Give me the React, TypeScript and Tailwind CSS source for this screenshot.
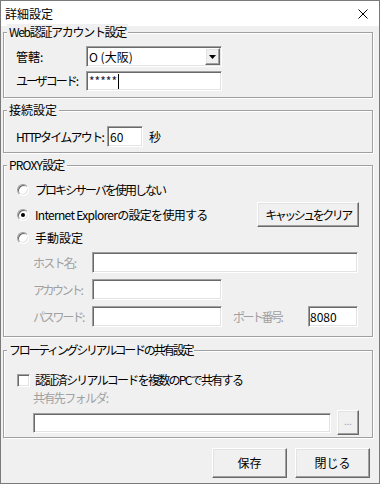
import type { ReactNode } from 'react';

const sunken =
  "border border-t-[#a0a0a0] border-l-[#a0a0a0] border-r-white border-b-white shadow-[inset_1px_1px_0_#696969,inset_-1px_-1px_0_#e3e3e3] bg-white";
const raised =
  "border border-t-white border-l-white border-r-[#696969] border-b-[#696969] shadow-[inset_-1px_-1px_0_#a0a0a0,inset_1px_1px_0_#e3e3e3] bg-[#f0f0f0]";

function Group({ title, className, titleClass, children }: { title: string; className: string; titleClass: string; children: ReactNode }) {
  return (
    <div className={`relative border border-[#a0a0a0] shadow-[inset_1px_1px_0_#fff,1px_1px_0_#fff] ${className}`}>
      <span className={`absolute left-[3px] top-[-9px] bg-[#f0f0f0] px-[2px] leading-[16px] whitespace-nowrap ${titleClass}`}>{title}</span>
      {children}
    </div>
  );
}

function Radio({ checked }: { checked?: boolean }) {
  return (
    <span className="relative flex h-[12px] w-[12px] shrink-0 items-center justify-center rounded-full border border-t-[#a0a0a0] border-l-[#a0a0a0] border-r-white border-b-white bg-white shadow-[inset_1px_1px_0_#696969,inset_-1px_-1px_0_#e3e3e3]">
      {checked && <span className="h-[4px] w-[4px] rounded-full bg-black" />}
    </span>
  );
}

function TextBox({ className, children }: { className: string; children?: ReactNode }) {
  return <div className={`${sunken} flex shrink-0 items-center pl-[1px] ${className}`}>{children}</div>;
}

function Label({ className, children }: { className: string; children: ReactNode }) {
  return <span className={`shrink-0 whitespace-nowrap ${className}`}>{children}</span>;
}

export default function App() {
  return (
    <div className="flex h-[484px] w-[380px] flex-col border border-[#7a7a7a] bg-[#f0f0f0] text-[12px] leading-[16px] text-black font-['Noto_Sans_CJK_JP',sans-serif]">
      {/* title bar */}
      <div className="flex h-[25px] items-center justify-between bg-white pl-[4px] pr-[11px]">
        <span>詳細設定</span>
        <svg width="10" height="10" viewBox="0 0 10 10">
          <path d="M0.5 0.5 L9.5 9.5 M9.5 0.5 L0.5 9.5" stroke="#000" strokeWidth="1" />
        </svg>
      </div>

      <div className="flex flex-col pl-[2px] pr-[6px]">
        <Group title="Web認証アカウント設定" titleClass="tracking-[-1.3px]" className="mt-[6px] h-[66px]">
          <div className="flex flex-col gap-[4px] pl-[12px] pt-[13px]">
            <div className="flex h-[21px] items-center">
              <Label className="w-[70px]">管轄:</Label>
              <div className={`${sunken} flex h-[21px] w-[136px] items-center justify-between pl-[2px] pr-[1px]`}>
                <span>O (大阪)</span>
                <span className={`${raised} flex h-[17px] w-[15px] items-center justify-center`}>
                  <svg width="7" height="4" viewBox="0 0 7 4">
                    <path d="M0 0 H7 L3.5 4 Z" fill="#000" />
                  </svg>
                </span>
              </div>
            </div>
            <div className="flex h-[20px] items-center">
              <Label className="w-[70px] tracking-[-2px]">ユーザコード:</Label>
              <TextBox className="h-[20px] w-[136px] pl-[2px]">
                <span className="text-[#1a1a3a]">*****</span>
                <span className="ml-[1px] h-[15px] w-[1px] bg-black" />
              </TextBox>
            </div>
          </div>
        </Group>

        <Group title="接続設定" titleClass="" className="mt-[12px] h-[43px]">
          <div className="flex items-center pl-[12px] pt-[15px]">
            <Label className="w-[91px] tracking-[-1.7px]">HTTPタイムアウト:</Label>
            <TextBox className="h-[21px] w-[36px] pl-[2px]">60</TextBox>
            <span className="ml-[6px]">秒</span>
          </div>
        </Group>

        <Group title="PROXY設定" titleClass="tracking-[-0.8px]" className="mt-[12px] h-[172px]">
          <div className="flex flex-col pl-[13px] pr-[13px] pt-[12px]">
            <div className="flex h-[24px] items-center gap-[6px]">
              <Radio />
              <span className="tracking-[-2px]">プロキシサーバを使用しない</span>
            </div>
            <div className="flex h-[25px] items-center gap-[6px]">
              <Radio checked />
              <span className="whitespace-nowrap tracking-[-0.7px]">Internet Explorerの設定を使用する</span>
              <button className={`${raised} ml-auto h-[25px] w-[102px] whitespace-nowrap tracking-[-2.5px]`}>キャッシュをクリア</button>
            </div>
            <div className="flex h-[22px] items-center gap-[6px]">
              <Radio />
              <span>手動設定</span>
            </div>
          </div>
          <div className="mt-[3px] flex flex-col gap-[6px] pl-[29px] text-[#a0a0a0]">
            <div className="flex h-[21px] items-center">
              <Label className="w-[59px] tracking-[-1.8px]">ホスト名:</Label>
              <TextBox className="h-[21px] w-[266px]" />
            </div>
            <div className="flex h-[21px] items-center">
              <Label className="w-[59px] tracking-[-2.5px]">アカウント:</Label>
              <TextBox className="h-[21px] w-[130px]" />
            </div>
            <div className="flex h-[21px] items-center">
              <Label className="w-[59px] tracking-[-2.2px]">パスワード:</Label>
              <TextBox className="h-[21px] w-[130px]" />
              <Label className="ml-[11px] w-[75px] tracking-[-2.5px]">ポート番号:</Label>
              <TextBox className="h-[21px] w-[50px] text-black">8080</TextBox>
            </div>
          </div>
        </Group>

        <Group title="フローティングシリアルコードの共有設定" titleClass="tracking-[-2.3px]" className="mt-[13px] h-[88px]">
          <div className="flex flex-col pt-[21px]">
            <div className="flex h-[16px] items-center gap-[5px] pl-[13px]">
              <span className={`${sunken} h-[13px] w-[13px] shrink-0`} />
              <span className="whitespace-nowrap tracking-[-1.7px]">認証済シリアルコードを複数のPCで共有する</span>
            </div>
            <div className="mt-[2px] flex h-[16px] items-center pl-[29px] tracking-[-1.6px] text-[#a0a0a0]">共有先フォルダ:</div>
            <div className="mt-[4px] flex h-[25px] items-center gap-[6px] pl-[29px]">
              <TextBox className="h-[20px] w-[298px]" />
              <button className={`${raised} flex h-[25px] w-[22px] items-start justify-center pt-[6px] text-[9px] leading-[10px] text-[#a0a0a0]`}>
                ...
              </button>
            </div>
          </div>
        </Group>

        <div className="mr-[3px] mt-[10px] flex justify-end gap-[8px]">
          <button className={`${raised} h-[30px] w-[75px]`}>保存</button>
          <button className={`${raised} h-[30px] w-[75px]`}>閉じる</button>
        </div>
      </div>
    </div>
  );
}
